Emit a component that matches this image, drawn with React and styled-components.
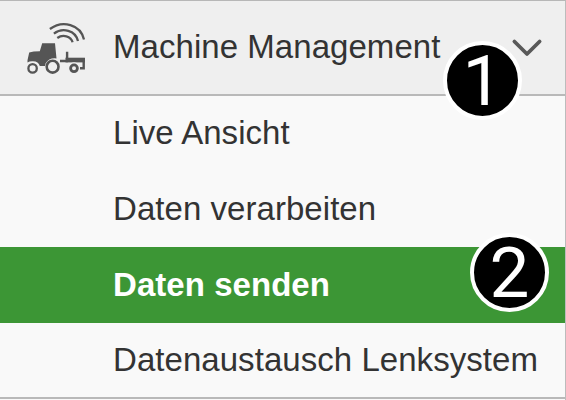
import React from "react";
import styled, { createGlobalStyle } from "styled-components";

const GlobalStyle = createGlobalStyle`
  * { box-sizing: border-box; }
  body { margin: 0; background: #f9f9f9; overflow: hidden; }
`;

const Menu = styled.nav`
  position: relative;
  width: 566px;
  height: 400px;
  overflow: hidden;
  background: #f9f9f9;
  border-top: 1px solid #b7b7b7;
  border-right: 1px solid #bcbcbc;
  font-family: "Liberation Sans", Arial, sans-serif;
  font-size: 33px;
  color: #333;
`;

const Header = styled.header`
  display: flex;
  align-items: center;
  height: 95px;
  padding: 0 22px 2px 25px;
  background: #efefef;
  border-bottom: 2px solid #b9b9b9;
`;

const MachineIcon = styled.svg`
  flex: none;
  width: 64px;
  height: 56px;
  margin-right: 24px;
`;

const Label = styled.span`
  line-height: 38px;
  white-space: nowrap;
  letter-spacing: 0.05px;
`;

const Title = styled(Label)`
  flex: 1;
`;

const Chevron = styled.svg`
  flex: none;
  width: 32px;
  height: 20px;
`;

const List = styled.ul`
  margin: 0;
  padding: 0;
  list-style: none;
  border-bottom: 2px solid #b9b9b9;
`;

const Item = styled.li`
  display: flex;
  align-items: center;
  height: ${(p) => p.$height}px;
  padding: 0 0 ${(p) => p.$lift || 0}px 113px;
  background: ${(p) => (p.$active ? "#3c9635" : "#f9f9f9")};
  color: ${(p) => (p.$active ? "#fff" : "#333")};
  font-weight: ${(p) => (p.$active ? 700 : 400)};
`;

const Badge = styled.span`
  position: absolute;
  left: ${(p) => p.$left}px;
  top: ${(p) => p.$top}px;
  display: flex;
  align-items: center;
  justify-content: center;
  width: 79px;
  height: 79px;
  border: 4px solid #fff;
  border-radius: 50%;
  background: #000;
  color: #fff;
  font: 400 71px/71px Roboto, sans-serif;
`;

const items = [
  { label: "Live Ansicht", height: 75, lift: 2 },
  { label: "Daten verarbeiten", height: 76 },
  { label: "Daten senden", height: 76, lift: 1, active: true },
  { label: "Datenaustausch Lenksystem", height: 74 },
];

export default function App() {
  return (
    <>
      <GlobalStyle />
      <Menu>
        <Header>
          <MachineIcon viewBox="25 19 64 56" fill="none" stroke="#555" aria-hidden="true">
            <path d="M27.5 60.2L29.2 52.5Q33 51.2 39.8 51.2L42.2 43.3H55L56.5 58.4Q49 57.5 45.5 63.5L45 66H39.8Q38.5 61.3 33 61.2Q29.5 61 27.5 62.5Z" fill="#555" stroke="none" />
            <circle cx="32.6" cy="68.4" r="4.2" strokeWidth="2.3" />
            <circle cx="52.6" cy="66.7" r="5.9" strokeWidth="2.6" />
            <path d="M60 61H68M67.1 51.8V59M83.7 58V68.2H80" strokeWidth="2.4" />
            <path d="M65.5 57.7H84.9V62.4H65.5Z" fill="#555" stroke="none" />
            <circle cx="74" cy="68.3" r="6" fill="#efefef" stroke="none" />
            <circle cx="74" cy="68.3" r="3.4" strokeWidth="2.8" />
            <path d="M49.9 29C62.5 19.5 80.5 24.5 84 39.4M53.9 33.6C62.5 27 75.5 30.3 78 41M57.3 38C62.8 34 71 36 72.6 42.3" strokeWidth="2.3" />
          </MachineIcon>
          <Title>Machine Management</Title>
          <Chevron viewBox="0 0 32 20" aria-hidden="true">
            <path d="M3.4 4.5L16 17L28.6 4.5" fill="none" stroke="#595959" strokeWidth="3.8" strokeLinejoin="round" strokeLinecap="round" />
          </Chevron>
        </Header>
        <List>
          {items.map((item) => (
            <Item key={item.label} $height={item.height} $lift={item.lift} $active={item.active}>
              <Label>{item.label}</Label>
            </Item>
          ))}
        </List>
        <Badge $left={443} $top={40}>1</Badge>
        <Badge $left={470} $top={232}>2</Badge>
      </Menu>
    </>
  );
}
